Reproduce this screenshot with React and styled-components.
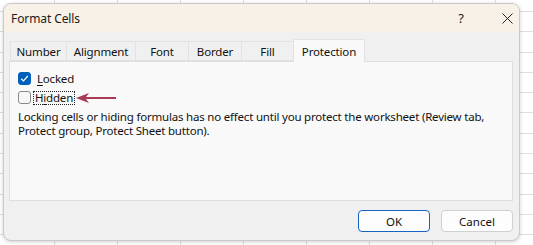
import React from 'react'
import styled, { createGlobalStyle } from 'styled-components'

const Global = createGlobalStyle`
  html, body { margin: 0; padding: 0; }
  body {
    width: 533px;
    height: 245px;
    overflow: hidden;
    font-family: "Noto Sans", "Open Sans", sans-serif;
    background-color: #fff;
    background-image:
      repeating-linear-gradient(to right, transparent 0 54px, #dedede 54px 55px, transparent 55px 63px),
      repeating-linear-gradient(to bottom, transparent 0 11px, #dedede 11px 12px, transparent 12px 20.3px);
  }
`

const Page = styled.div`
  padding: 3px 13px 4px 3px;
`

const Dialog = styled.div`
  width: 517px;
  height: 238px;
  box-sizing: border-box;
  border: 1px solid #c9c9c9;
  border-radius: 8px;
  background: #f0f0f0;
  box-shadow: 0 1px 4px rgba(0, 0, 0, 0.18);
  overflow: hidden;
  display: flex;
  flex-direction: column;
`

const TitleBar = styled.div`
  height: 29px;
  background: #f8f1e7;
  display: flex;
  align-items: center;
  padding: 0 0 0 7px;
  font-size: 12px;
  letter-spacing: -0.1px;
  color: #1a1a1a;
`

const Title = styled.div`
  flex: 1;
`

const TitleButton = styled.div`
  width: 24px;
  margin-left: 22px;
  display: flex;
  justify-content: center;
  align-items: center;
  font-size: 13px;
  color: #222;
`

const Body = styled.div`
  flex: 1;
  display: flex;
  flex-direction: column;
  padding: 7px 6px 8px 5px;
`

const Tabs = styled.div`
  display: flex;
  align-items: flex-end;
  height: 22px;
  padding-left: 1px;
`

const Tab = styled.div`
  width: ${p => p.$w}px;
  box-sizing: border-box;
  display: flex;
  justify-content: center;
  align-items: center;
  font-size: 11.5px;
  letter-spacing: -0.15px;
  color: #111;
  background: ${p => (p.$active ? '#f9f9f9' : '#f0f0f0')};
  border: 1px solid #e2e2e2;
  border-bottom: ${p => (p.$active ? 'none' : '1px solid #e2e2e2')};
  margin-right: -1px;
  position: relative;
  z-index: ${p => (p.$active ? 2 : 1)};
  margin-bottom: ${p => (p.$active ? '-1px' : '0')};
  height: ${p => (p.$active ? 23 : 20)}px;
`

const Panel = styled.div`
  height: 140px;
  box-sizing: border-box;
  background: #f9f9f9;
  border: 1px solid #dedede;
  padding: 7px 8px 0 8px;
  font-size: 11.5px;
  letter-spacing: -0.2px;
  color: #111;
`

const CheckRow = styled.div`
  display: flex;
  align-items: center;
  height: 19px;
`

const Box = styled.span`
  width: 13px;
  height: 13px;
  box-sizing: border-box;
  border-radius: 3px;
  background: ${p => (p.$checked ? '#005fb8' : '#f7f7f7')};
  border: 1px solid ${p => (p.$checked ? '#005fb8' : '#8a8a8a')};
  display: flex;
  align-items: center;
  justify-content: center;
  margin-right: ${p => (p.$checked ? 4 : 2)}px;
`

const Label = styled.span`
  padding: 0 1px;
  line-height: 12px;
  border: 1px dotted ${p => (p.$focus ? '#222' : 'transparent')};
  u { text-decoration-thickness: 1px; text-underline-offset: 2px; }
`

const Arrow = styled.svg`
  margin-left: 1px;
`

const Note = styled.p`
  margin: 3px 0 0 0;
  line-height: 13.5px;
  white-space: nowrap;
`

const Footer = styled.div`
  display: flex;
  justify-content: flex-end;
  gap: 11px;
  padding-top: 9px;
`

const Button = styled.button`
  width: 72px;
  height: 22px;
  box-sizing: border-box;
  border-radius: 4px;
  border: 1px solid ${p => (p.$primary ? '#1565c0' : '#d0d0d0')};
  background: #fdfdfd;
  font-family: inherit;
  font-size: 11.5px;
  color: #111;
  padding: 0;
`

const tabs = [
  ['Number', 57],
  ['Alignment', 70],
  ['Font', 54],
  ['Border', 54],
  ['Fill', 53],
  ['Protection', 72],
]

export default function App() {
  return (
    <>
      <Global />
      <Page>
        <Dialog>
          <TitleBar>
            <Title>Format Cells</Title>
            <TitleButton>?</TitleButton>
            <TitleButton>
              <svg width="11" height="11" viewBox="0 0 11 11">
                <path d="M0.5 0.5 L10.5 10.5 M10.5 0.5 L0.5 10.5" stroke="#222" strokeWidth="1" />
              </svg>
            </TitleButton>
          </TitleBar>
          <Body>
            <Tabs>
              {tabs.map(([t, w]) => (
                <Tab key={t} $w={w} $active={t === 'Protection'}>{t}</Tab>
              ))}
            </Tabs>
            <Panel>
              <CheckRow>
                <Box $checked>
                  <svg width="9" height="9" viewBox="0 0 9 9">
                    <path d="M1.2 4.8 L3.5 7 L7.8 2" fill="none" stroke="#fff" strokeWidth="1.2" />
                  </svg>
                </Box>
                <Label><u>L</u>ocked</Label>
              </CheckRow>
              <CheckRow>
                <Box />
                <Label $focus>H<u>i</u>dden</Label>
                <Arrow width="40" height="10" viewBox="0 0 40 10">
                  <path d="M0 5 L13 0 L10 4 L40 4 L40 6 L10 6 L13 10 Z" fill="#a83a55" />
                </Arrow>
              </CheckRow>
              <Note>
                Locking cells or hiding formulas has no effect until you protect the worksheet (Review tab,
                <br />
                Protect group, Protect Sheet button).
              </Note>
            </Panel>
            <Footer>
              <Button $primary>OK</Button>
              <Button>Cancel</Button>
            </Footer>
          </Body>
        </Dialog>
      </Page>
    </>
  )
}
